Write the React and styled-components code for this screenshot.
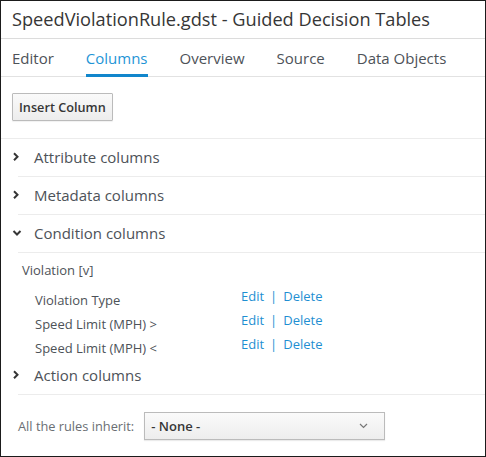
import React from "react";
import styled, { createGlobalStyle } from "styled-components";

const Global = createGlobalStyle`
  html, body { margin: 0; padding: 0; background: #fff; }
  body { font-family: "Open Sans", "Noto Sans", sans-serif; }
  * { box-sizing: border-box; }
`;

const Frame = styled.div`
  width: 486px;
  height: 457px;
  border: 1px solid #1b1b1b;
  overflow: hidden;
  display: flex;
  flex-direction: column;
`;

const Title = styled.div`
  height: 38px;
  padding: 4px 0 0 11px;
  font-size: 18.2px;
  line-height: 28px;
  color: #363636;
  border-bottom: 1px solid #dcdcdc;
  white-space: nowrap;
`;

const Tabs = styled.div`
  display: flex;
  gap: 32px;
  height: 38px;
  padding-left: 11px;
  border-bottom: 1px solid #e2e2e2;
`;

const Tab = styled.div`
  font-size: 15px;
  line-height: 20px;
  padding-top: 9px;
  color: ${(p) => (p.$active ? "#1f95d6" : "#4d5258")};
  border-bottom: 3px solid ${(p) => (p.$active ? "#1186cc" : "transparent")};
  margin-bottom: -1px;
  white-space: nowrap;
`;

const Toolbar = styled.div`
  padding: 16px 0 17px 11px;
  border-bottom: 1px solid #ececec;
`;

const Button = styled.button`
  height: 28px;
  padding: 0 6px;
  font-family: inherit;
  font-size: 12.7px;
  font-weight: 600;
  color: #363636;
  background: linear-gradient(#fafafa, #ededed);
  border: 1px solid #bbbbbb;
  border-radius: 1px;
  box-shadow: 0 1px 1px rgba(0, 0, 0, 0.06);
`;

const Section = styled.div`
  display: flex;
  flex-direction: column;
`;

const SectionHead = styled.div`
  display: flex;
  align-items: center;
  height: 38px;
  margin-left: 17px;
  padding-bottom: 1px;
  border-bottom: 1px solid #ececec;
  position: relative;
`;

const Chevron = styled.span`
  position: absolute;
  left: -6px;
  top: 50%;
  transform: translateY(-62%);
  display: flex;
`;

const SectionTitle = styled.span`
  margin-left: 16px;
  font-size: 15px;
  color: #4d5258;
`;

const Group = styled.div`
  padding: 8px 0 0 21px;
`;

const GroupTitle = styled.div`
  font-size: 13px;
  line-height: 18px;
  color: #4d5258;
  margin-bottom: 8px;
`;

const ColRow = styled.div`
  display: grid;
  grid-template-columns: 206px auto;
  height: 24px;
  padding-left: 13px;
  font-size: 13px;
  &:last-child { height: 22px; }
`;

const ColLabel = styled.span`
  color: #4d5258;
  line-height: 18px;
  padding-top: 4px;
`;

const Links = styled.span`
  display: flex;
  gap: 6px;
  line-height: 18px;
  color: #1f8fd2;
`;

const Link = styled.a`
  color: #1f8fd2;
  text-decoration: none;
`;

const Inherit = styled.div`
  display: flex;
  align-items: center;
  gap: 10px;
  padding: 17px 0 0 17px;
`;

const InheritLabel = styled.span`
  font-size: 12.8px;
  color: #6a6e73;
`;

const Select = styled.div`
  width: 241px;
  height: 28px;
  display: flex;
  align-items: center;
  justify-content: space-between;
  padding: 0 16px 0 6px;
  border: 1px solid #bbbbbb;
  background: linear-gradient(#fafafa, #ededed);
  box-shadow: 0 1px 1px rgba(0, 0, 0, 0.08);
  font-size: 13px;
  font-weight: 600;
  color: #363636;
`;

const Right = () => (
  <svg width="8" height="10" viewBox="0 0 8 10">
    <path d="M2 1.5 L5.5 5 L2 8.5" fill="none" stroke="#363636" strokeWidth="2" />
  </svg>
);

const Down = () => (
  <svg width="10" height="8" viewBox="0 0 10 8">
    <path d="M1.5 2 L5 5.5 L8.5 2" fill="none" stroke="#363636" strokeWidth="2" />
  </svg>
);

const SelectCaret = () => (
  <svg width="9" height="6" viewBox="0 0 9 6">
    <path d="M1 1 L4.5 4.5 L8 1" fill="none" stroke="#777" strokeWidth="1.2" />
  </svg>
);

const columns = ["Violation Type", "Speed Limit (MPH) >", "Speed Limit (MPH) <"];

export default function App() {
  return (
    <>
      <Global />
      <Frame>
        <Title>SpeedViolationRule.gdst - Guided Decision Tables</Title>
        <Tabs>
          <Tab>Editor</Tab>
          <Tab $active>Columns</Tab>
          <Tab>Overview</Tab>
          <Tab>Source</Tab>
          <Tab>Data Objects</Tab>
        </Tabs>
        <Toolbar>
          <Button>Insert Column</Button>
        </Toolbar>
        <Section>
          <SectionHead>
            <Chevron><Right /></Chevron>
            <SectionTitle>Attribute columns</SectionTitle>
          </SectionHead>
          <SectionHead>
            <Chevron><Right /></Chevron>
            <SectionTitle>Metadata columns</SectionTitle>
          </SectionHead>
          <SectionHead>
            <Chevron><Down /></Chevron>
            <SectionTitle>Condition columns</SectionTitle>
          </SectionHead>
          <Group>
            <GroupTitle>Violation [v]</GroupTitle>
            {columns.map((c) => (
              <ColRow key={c}>
                <ColLabel>{c}</ColLabel>
                <Links>
                  <Link>Edit</Link>
                  <span>|</span>
                  <Link>Delete</Link>
                </Links>
              </ColRow>
            ))}
          </Group>
          <SectionHead>
            <Chevron><Right /></Chevron>
            <SectionTitle>Action columns</SectionTitle>
          </SectionHead>
        </Section>
        <Inherit>
          <InheritLabel>All the rules inherit:</InheritLabel>
          <Select>
            <span>- None -</span>
            <SelectCaret />
          </Select>
        </Inherit>
      </Frame>
    </>
  );
}
